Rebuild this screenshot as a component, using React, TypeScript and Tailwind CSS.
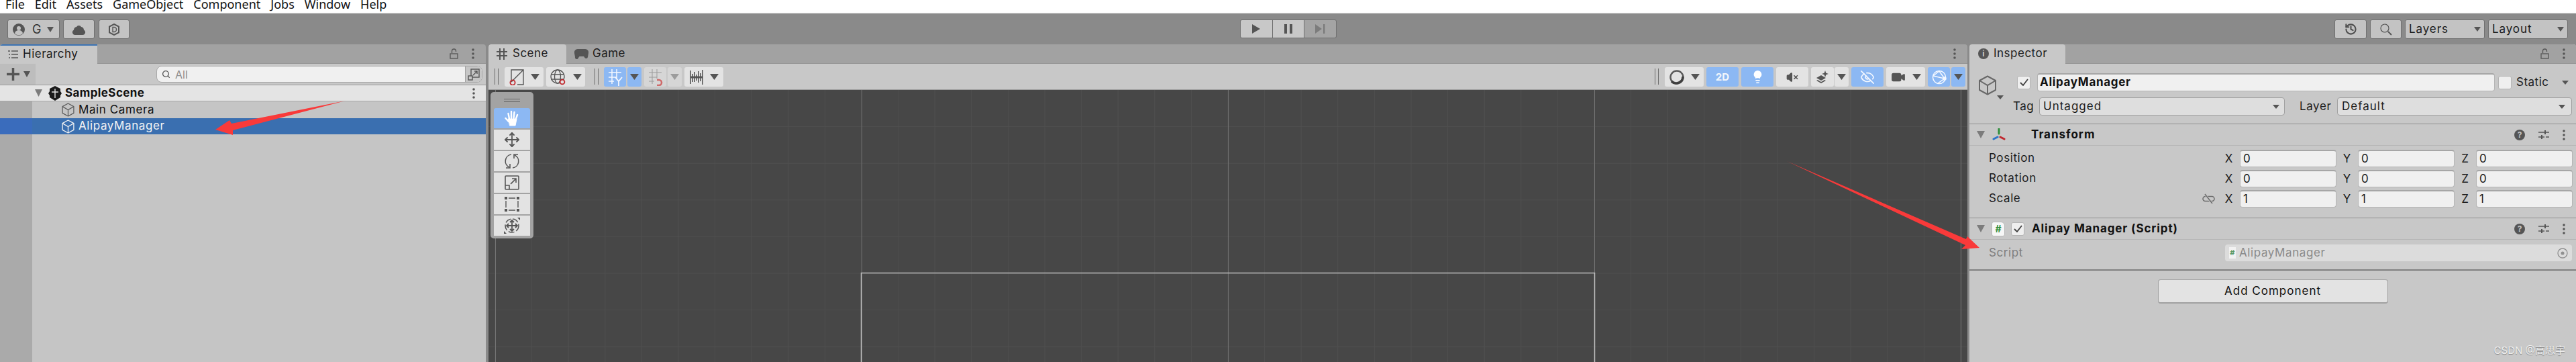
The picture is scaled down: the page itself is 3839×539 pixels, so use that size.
import type { ReactNode } from "react";
import { Lightbulb, Move, Search, VolumeX, EyeOff, Video, History } from "lucide-react";

const DARK = "#555555";

function Tri({ w = 10, h = 7, color = DARK }: { w?: number; h?: number; color?: string }) {
  return (
    <svg width={w} height={h} viewBox="0 0 10 7" className="shrink-0" preserveAspectRatio="none">
      <path d="M0 0h10L5 7z" fill={color} />
    </svg>
  );
}

function Dots() {
  return (
    <svg width="4" height="16" viewBox="0 0 4 16" className="shrink-0">
      <circle cx="2" cy="2" r="1.8" fill={DARK} />
      <circle cx="2" cy="8" r="1.8" fill={DARK} />
      <circle cx="2" cy="14" r="1.8" fill={DARK} />
    </svg>
  );
}

function Lock() {
  return (
    <svg width="13" height="16" viewBox="0 0 13 16" fill="none" stroke={DARK} strokeWidth="1.3" className="shrink-0">
      <path d="M3.5 7V4a3 3 0 0 1 6 0v1" />
      <rect x="1" y="8" width="11" height="7" />
    </svg>
  );
}

function Cube({ size = 22, color = DARK, width = 1.6 }: { size?: number; color?: string; width?: number }) {
  return (
    <svg width={size} height={size} viewBox="0 0 30 30" fill="none" stroke={color} strokeWidth={(width * 30) / size} className="shrink-0">
      <path d="M15 1.5 27 8v14l-12 6.5L3 22V8z" strokeLinejoin="round" />
      <path d="M3 8l12 7 12-7M15 15v13.5" />
    </svg>
  );
}

function Handles() {
  return <div className="w-[6px] h-[24px] mt-[2px] shrink-0 border-x border-[#6a6a6a]" />;
}

function Btn({ w, blue, faded, children }: { w: number; blue?: boolean; faded?: boolean; children: ReactNode }) {
  const tone = blue ? "bg-[#8cb8f3]" : faded ? "bg-[#d6d6d6]" : "bg-[#e3e3e3]";
  return (
    <div style={{ width: w }} className={`h-[29px] shrink-0 rounded-[3px] flex items-center justify-center gap-[10px] ${tone}`}>
      {children}
    </div>
  );
}

function TopBtn({ className, children }: { className: string; children: ReactNode }) {
  return (
    <div className={`h-[29px] shrink-0 rounded-[3px] border border-[#6f6f6f] bg-[#c3c3c3] flex items-center ${className}`}>{children}</div>
  );
}

function Tab({ w, active, children }: { w: number; active?: boolean; children: ReactNode }) {
  return (
    <div style={{ width: w }} className={`h-[29px] shrink-0 flex items-center rounded-t-[4px] ${active ? "bg-[#c8c8c8]" : ""}`}>
      {children}
    </div>
  );
}

function AxisField({ axis, value, gap }: { axis: string; value: string; gap: string }) {
  return (
    <>
      <span className={`w-[17px] text-center text-[17px] leading-none text-[#1c1c1c] ${gap}`}>{axis}</span>
      <div className="w-[144px] h-[26px] ml-[8px] pl-[4px] rounded-[4px] bg-[#f0f0f0] border border-[#b4b4b4] border-t-2 border-t-[#a6a6a6] flex items-center text-[17px] text-[#1c1c1c]">
        {value}
      </div>
    </>
  );
}

function VectorRow({ label, value, link }: { label: string; value: string; link?: boolean }) {
  return (
    <div className="flex items-center h-[26px]">
      <span className="w-[349px] ml-[29px] text-[17px] tracking-[0.6px] text-[#1c1c1c] shrink-0">{label}</span>
      <div className="w-[22px] -ml-[33px] mr-[11px] shrink-0 flex justify-center">
        {link && (
          <svg width="19" height="16" viewBox="0 0 19 16" fill="none" stroke="#6b6b6b" strokeWidth="1.5">
            <rect x="1" y="4.5" width="17" height="7" rx="3.5" />
            <path d="M4 1l11 14" stroke="#c8c8c8" strokeWidth="3" />
            <path d="M4 1l11 14" />
          </svg>
        )}
      </div>
      <AxisField axis="X" value={value} gap="" />
      <AxisField axis="Y" value={value} gap="ml-[7px]" />
      <AxisField axis="Z" value={value} gap="ml-[7px]" />
    </div>
  );
}

function CompTools() {
  return (
    <div className="ml-auto mr-[16px] flex items-center gap-[20px]">
      <div className="w-[16px] h-[16px] rounded-full bg-[#555555] text-[#c8c8c8] text-[12px] font-bold leading-none flex items-center justify-center">?</div>
      <svg width="16" height="15" viewBox="0 0 16 15" fill="none" stroke={DARK} strokeWidth="1.5">
        <path d="M0 4h16M0 11h16" strokeDasharray="9 2 5" />
        <path d="M10 1v6M5 8v6" strokeWidth="2" />
      </svg>
      <Dots />
    </div>
  );
}

function CompHeader({ children }: { children: ReactNode }) {
  return <div className="h-[33px] flex items-center border-t border-[#8f8f8f] border-b border-b-[#b6b6b6] pl-[11px]">{children}</div>;
}

function ToolBtn({ active, children }: { active?: boolean; children: ReactNode }) {
  return <div className={`w-[54px] h-[30px] flex items-center justify-center ${active ? "bg-[#8cb8f3] rounded-t-[3px]" : "bg-[#e3e3e3]"}`}>{children}</div>;
}

function SceneGrid() {
  const vs: number[] = [];
  for (let i = 0; i < 41; i++) vs.push(10 + i * 54.6);
  const hs = [54.6, 109.2, 163.8, 218.4, 273, 327.6, 382.2];
  return (
    <svg width="2204" height="405" className="absolute inset-0">
      {vs.map((x) => (
        <line key={x} x1={x} x2={x} y1="0" y2="405" stroke="#505050" />
      ))}
      {hs.map((y) => (
        <line key={y} x1="0" x2="2204" y1={y} y2={y} stroke="#505050" />
      ))}
      {[10.5, 556.5, 1102.5, 1648.5, 2194.5].map((x) => (
        <line key={x} x1={x} x2={x} y1="0" y2="405" stroke="#747474" />
      ))}
      <path d="M555.5 405V272.5H1648.5V405" fill="none" stroke="#bdbdbd" strokeWidth="1.5" />
    </svg>
  );
}

function SceneToolbar() {
  return (
    <div className="h-[39px] bg-[#c8c8c8] border-b border-[#9a9a9a] pt-[5px] flex items-start pl-[9px]">
      <Handles />
      <div className="ml-[9px]"><Btn w={58}>
        <svg width="22" height="24" viewBox="0 0 22 24" fill="none" stroke={DARK} strokeWidth="1.4">
          <path d="M3 17V1h18v22H12M3 19L20 2" />
          <circle cx="5" cy="20" r="3.6" stroke="#c0272d" strokeWidth="1.8" />
        </svg>
        <Tri w={13} h={9} />
      </Btn></div>
      <div className="ml-[4px]"><Btn w={58}>
        <svg width="24" height="24" viewBox="0 0 24 24" fill="none" stroke={DARK} strokeWidth="1.3">
          <circle cx="11" cy="11" r="10" />
          <ellipse cx="11" cy="11" rx="4.5" ry="10" />
          <path d="M1 8h20M1 15h20" />
          <circle cx="18" cy="19" r="3.4" fill="#e3e3e3" stroke="#c0272d" strokeWidth="1.8" />
        </svg>
        <Tri w={13} h={9} />
      </Btn></div>
      <div className="ml-[14px]"><Handles /></div>
      <div className="ml-[8px]"><Btn w={33} blue>
        <svg width="22" height="26" viewBox="0 0 22 26" fill="none" stroke="#f4f8ff" strokeWidth="1.5">
          <path d="M6 1v22M13 1v14M1 6h19M1 13h12M1 19h8" />
          <path d="M11 13l5 6 5-6M16 19v7" strokeWidth="1.8" />
        </svg>
      </Btn></div>
      <div className="ml-[2px]"><Btn w={21} blue><Tri w={13} h={9} /></Btn></div>
      <div className="ml-[4px]"><Btn w={33} faded>
        <svg width="22" height="26" viewBox="0 0 22 26" fill="none" stroke="#9a9a9a" strokeWidth="1">
          <path d="M6 1v22M13 1v14M1 6h19M1 13h12M1 19h8" />
          <path d="M13 17h3a4 4 0 0 1 0 8h-3" stroke="#cf6a6a" strokeWidth="2.6" />
        </svg>
      </Btn></div>
      <div className="ml-[2px]"><Btn w={21} faded><Tri w={13} h={9} color="#9c9c9c" /></Btn></div>
      <div className="ml-[4px]"><Btn w={58}>
        <svg width="20" height="24" viewBox="0 0 20 24" stroke={DARK} strokeWidth="1.6">
          <path d="M1 2v20M4 7v12M7 4v15M10 8v9M13 3v17M16 6v12M19 1v22" />
          <path d="M1 12h18" strokeWidth="3" />
        </svg>
        <Tri w={13} h={9} />
      </Btn></div>

      <div className="ml-auto flex items-start pr-[3px]">
        <Handles />
        <div className="ml-[9px]"><Btn w={58}>
          <svg width="22" height="22" viewBox="0 0 22 22">
            <circle cx="11" cy="11" r="9.5" fill="none" stroke="#5c5c5c" strokeWidth="2.5" />
            <path d="M3 17a10 10 0 0 0 17-7" fill="none" stroke="#3f3f3f" strokeWidth="3.5" />
          </svg>
          <Tri w={13} h={9} />
        </Btn></div>
        <div className="ml-[4px]"><Btn w={48} blue><span className="text-[15px] font-bold text-[#f2f6fb] leading-none">2D</span></Btn></div>
        <div className="ml-[4px]"><Btn w={48} blue><Lightbulb size={21} fill="#ffffff" stroke="#ffffff" strokeWidth={1.5} /></Btn></div>
        <div className="ml-[4px]"><Btn w={48}><VolumeX size={18} fill={DARK} stroke={DARK} strokeWidth={2.2} /></Btn></div>
        <div className="ml-[4px]"><Btn w={34}>
          <svg width="18" height="19" viewBox="0 0 18 19" fill={DARK}>
            <path d="M0 11l7-4 7 4-7 4zM0 15l2-1 5 3 5-3 2 1-7 4z" />
            <path d="M13 0l1.3 3.7L18 5l-3.7 1.3L13 10l-1.3-3.7L8 5l3.7-1.3z" />
          </svg>
        </Btn></div>
        <div className="ml-[1px]"><Btn w={21}><Tri w={13} h={9} /></Btn></div>
        <div className="ml-[4px]"><Btn w={48} blue><EyeOff size={22} stroke="#f4f8ff" strokeWidth={1.8} /></Btn></div>
        <div className="ml-[4px]"><Btn w={58}><Video size={22} fill={DARK} stroke={DARK} strokeWidth={1.5} /><Tri w={13} h={9} /></Btn></div>
        <div className="ml-[4px]"><Btn w={33} blue>
          <svg width="22" height="22" viewBox="0 0 22 22" fill="none" stroke="#f4f8ff" strokeWidth="1.5">
            <circle cx="11" cy="11" r="9.5" />
            <path d="M2 9l9-7 8 11-10 7M11 2l8 11M2 9l17 4" />
            <circle cx="19" cy="13" r="2" fill="#f4f8ff" />
          </svg>
        </Btn></div>
        <div className="ml-[2px]"><Btn w={21} blue><Tri w={13} h={9} /></Btn></div>
      </div>
    </div>
  );
}

function ToolPalette() {
  return (
    <div className="absolute left-[3px] top-[3px] w-[64px] h-[218px] rounded-[5px] bg-[#a3a3a3] flex flex-col items-center">
      <div className="h-[24px] w-full flex items-center justify-center">
        <div className="w-[24px] h-[5px] border-y border-[#666666]" />
      </div>
      <div className="flex flex-col gap-[2px]">
        <ToolBtn active>
          <svg width="24" height="25" viewBox="0 0 24 25" fill="#ffffff" stroke="#ffffff" strokeWidth="2.4" strokeLinecap="round">
            <path d="M8 13L6.500 5M11 12V2M14.500 12L15.500 3M17.500 14L20 7M7 17L2.500 12" />
            <path d="M6.500 13H19L17 23H9z" strokeWidth="1" strokeLinejoin="round" />
          </svg>
        </ToolBtn>
        <ToolBtn><Move size={24} stroke={DARK} strokeWidth={1.8} /></ToolBtn>
        <ToolBtn>
          <svg width="24" height="24" viewBox="0 0 24 24" fill="none" stroke={DARK} strokeWidth="1.6">
            <path d="M11 2A10 10 0 0 0 8 21" />
            <path d="M9 16v6H3" />
            <path d="M13 22A10 10 0 0 0 16 3" />
            <path d="M15 8V2h6" />
          </svg>
        </ToolBtn>
        <ToolBtn>
          <svg width="22" height="22" viewBox="0 0 22 22" fill="none" stroke={DARK} strokeWidth="1.6">
            <rect x="1" y="1" width="20" height="20" rx="1" />
            <path d="M1 15h6v6M9 13l8-8M11 5h6v6" />
          </svg>
        </ToolBtn>
        <ToolBtn>
          <svg width="22" height="22" viewBox="0 0 22 22" fill={DARK} stroke={DARK}>
            <rect x="0.5" y="0.5" width="3" height="3" />
            <rect x="18.5" y="0.5" width="3" height="3" />
            <rect x="0.5" y="18.5" width="3" height="3" />
            <rect x="18.5" y="18.5" width="3" height="3" />
            <path d="M6 2h10M6 20h10M2 6v10M20 6v10" fill="none" strokeWidth="1.4" />
          </svg>
        </ToolBtn>
        <ToolBtn>
          <svg width="24" height="24" viewBox="0 0 24 24" fill="none" stroke={DARK} strokeWidth="1.5">
            <circle cx="12" cy="12" r="10" strokeDasharray="9 3" />
            <path d="M12 4v16M4 12h16M9 7l3-3 3 3M9 17l3 3 3-3M7 9l-3 3 3 3M17 9l3 3-3 3" strokeWidth="1.8" />
            <path d="M0 24v-4l4 4zM24 0v4l-4-4z" fill={DARK} stroke="none" />
          </svg>
        </ToolBtn>
      </div>
    </div>
  );
}

function Hierarchy() {
  return (
    <section className="w-[724px] shrink-0 flex flex-col rounded-t-[4px] overflow-hidden">
      <div className="h-[29px] bg-[#a2a2a2] flex items-center border-b border-[#949494]">
        <div className="w-[145px] h-[29px] bg-[#c8c8c8] border-t-2 border-[#3c74b4] flex items-center pl-[12px] gap-[7px]">
          <svg width="15" height="14" viewBox="0 0 15 14" stroke={DARK} strokeWidth="1.5">
            <path d="M5 2h10M5 7h10M5 12h10M0 2h3M1 7h2M1 12h2" />
          </svg>
          <span className="text-[17px] tracking-[0.5px] text-[#1c1c1c]">Hierarchy</span>
        </div>
        <div className="ml-auto mr-[17px] flex items-center gap-[20px]">
          <Lock />
          <Dots />
        </div>
      </div>
      <div className="h-[32px] bg-[#c8c8c8] border-b border-[#9a9a9a] flex items-center">
        <div className="w-[53px] h-[31px] bg-[#bdbdbd] flex items-center pl-[10px] gap-[6px]">
          <svg width="19" height="19" viewBox="0 0 19 19" stroke={DARK} strokeWidth="3.5"><path d="M9.5 0v19M0 9.5h19" /></svg>
          <Tri w={10} h={9} />
        </div>
        <div className="ml-[180px] w-[486px] h-[25px] rounded-[8px] bg-[#f0f0f0] border border-[#a8a8a8] flex items-center overflow-hidden">
          <div className="ml-[7px] flex items-center gap-[1px]"><Search size={13} stroke={DARK} strokeWidth={2.4} /></div>
          <span className="ml-[7px] text-[16px] text-[#8e8e8e]">All</span>
          <div className="ml-auto w-[25px] h-full bg-[#c6c6c6] border-l border-[#a0a0a0] flex items-center justify-center">
            <svg width="18" height="18" viewBox="0 0 18 18" fill="none" stroke={DARK} strokeWidth="1.4">
              <rect x="5" y="1" width="12" height="12" />
              <rect x="1" y="11" width="6" height="6" fill="#c6c6c6" />
              <path d="M8 10l6-6M10 4h4v4" />
            </svg>
          </div>
        </div>
      </div>
      <div className="h-[24px] bg-[#e4e4e4] border-b border-[#a8a8a8] flex items-center pl-[52px]">
        <Tri w={11} h={11} color="#7c7c7c" />
        <svg width="20" height="22" viewBox="0 0 20 22" className="ml-[9px]" fill="#1a1a1a">
          <path d="M10 0l8 4v4l2 3-2 3v3l-8 5-8-5v-3L0 11l2-3V4z" />
          <path d="M10 4v14M5 9h10" stroke="#e4e4e4" strokeWidth="1.4" />
        </svg>
        <span className="ml-[5px] text-[17px] font-bold tracking-[0.4px] text-[#111111]">SampleScene</span>
        <div className="ml-auto mr-[16px]"><Dots /></div>
      </div>
      <div className="flex-1 bg-[#c5c5c5] flex flex-col">
        <div className="h-[25px] flex">
          <div className="w-[48px] bg-[#aaaaaa]" />
          <div className="pl-[43px] flex items-center gap-[5px]">
            <Cube size={21} color="#5c5c5c" width={1.3} />
            <span className="text-[17px] tracking-[0.6px] text-[#111111]">Main Camera</span>
          </div>
        </div>
        <div className="h-[24px] flex bg-[#3a6fb0]">
          <div className="w-[48px] bg-[#3a6cbc]" />
          <div className="pl-[43px] flex items-center gap-[5px]">
            <Cube size={21} color="#f4f4f4" width={1.3} />
            <span className="text-[17px] tracking-[0.6px] text-[#f4f4f4]">AlipayManager</span>
          </div>
        </div>
        <div className="flex-1 w-[48px] bg-[#aaaaaa]" />
      </div>
    </section>
  );
}

function SceneView() {
  return (
    <section className="w-[2204px] ml-[4px] shrink-0 flex flex-col rounded-t-[4px] overflow-hidden">
      <div className="h-[29px] bg-[#a2a2a2] flex items-center border-b border-[#949494]">
        <Tab w={116} active>
          <svg width="16" height="17" viewBox="0 0 16 17" stroke={DARK} strokeWidth="2" className="ml-[12px]">
            <path d="M5 0v17M11 0v17M0 5h16M0 11h16" />
          </svg>
          <span className="ml-[8px] text-[17px] tracking-[0.5px] text-[#1c1c1c]">Scene</span>
        </Tab>
        <svg width="21" height="15" viewBox="0 0 21 15" fill={DARK} className="ml-[12px]">
          <path d="M5 0h11a5 5 0 0 1 5 6l-1 6a2.5 2.5 0 0 1-4.500 1l-1.500-2H7.500L6 13a2.500 2.500 0 0 1-5-1L0 6a5 5 0 0 1 5-6z" />
        </svg>
        <span className="ml-[6px] text-[17px] tracking-[0.5px] text-[#1c1c1c]">Game</span>
        <div className="ml-auto mr-[17px]"><Dots /></div>
      </div>
      <SceneToolbar />
      <div className="flex-1 relative bg-[#474747]">
        <SceneGrid />
        <ToolPalette />
      </div>
    </section>
  );
}

function Inspector() {
  return (
    <section className="flex-1 ml-[3px] flex flex-col rounded-t-[4px] overflow-hidden bg-[#c8c8c8]">
      <div className="h-[29px] bg-[#a2a2a2] flex items-center border-b border-[#949494]">
        <div className="w-[143px] h-[29px] rounded-t-[4px] bg-[#c8c8c8] flex items-center pl-[13px] gap-[7px]">
          <div className="w-[16px] h-[16px] rounded-full bg-[#555555] text-[#c8c8c8] text-[12px] font-bold leading-none flex items-center justify-center">i</div>
          <span className="text-[17px] tracking-[0.5px] text-[#1c1c1c]">Inspector</span>
        </div>
        <div className="ml-auto mr-[16px] flex items-center gap-[20px]">
          <Lock />
          <Dots />
        </div>
      </div>

      <div className="h-[89px] flex shrink-0">
        <div className="w-[65px] pl-[12px] pt-[17px] flex flex-col shrink-0">
          <Cube size={30} color="#686868" width={2} />
          <div className="ml-[29px]"><Tri w={10} h={6} /></div>
        </div>
        <div className="flex-1 flex flex-col">
          <div className="h-[27px] mt-[14px] flex items-center">
            <div className="ml-[6px] w-[20px] h-[20px] rounded-[3px] bg-[#efefef] border border-[#b4b4b4] flex items-center justify-center">
              <svg width="13" height="11" viewBox="0 0 13 11" fill="none" stroke="#3f3f3f" strokeWidth="1.8"><path d="M1 6l4 4 7-9" /></svg>
            </div>
            <div className="ml-[10px] w-[682px] h-[27px] rounded-[4px] bg-[#f0f0f0] border border-[#b4b4b4] border-t-2 border-t-[#a6a6a6] pl-[3px] flex items-center text-[17px] font-bold tracking-[0.7px] text-[#111111]">AlipayManager</div>
            <div className="ml-[5px] w-[20px] h-[20px] rounded-[3px] bg-[#efefef] border border-[#b4b4b4]" />
            <span className="ml-[7px] text-[17px] tracking-[0.5px] text-[#1c1c1c]">Static</span>
            <div className="ml-[19px]"><Tri w={10} h={6} /></div>
          </div>
          <div className="h-[27px] mt-[9px] flex items-center">
            <span className="text-[17px] tracking-[0.5px] text-[#1c1c1c] w-[39px]">Tag</span>
            <div className="w-[366px] h-[27px] rounded-[4px] bg-[#dedede] border border-[#a0a0a0] pl-[5px] pr-[7px] flex items-center justify-between text-[17px] tracking-[1px] text-[#1c1c1c]">
              Untagged <Tri w={10} h={6} />
            </div>
            <span className="ml-[22px] w-[56px] text-[17px] tracking-[0.6px] text-[#1c1c1c]">Layer</span>
            <div className="w-[350px] h-[27px] rounded-[4px] bg-[#dedede] border border-[#a0a0a0] pl-[6px] pr-[9px] flex items-center justify-between text-[17px] tracking-[1px] text-[#1c1c1c]">
              Default <Tri w={10} h={6} />
            </div>
          </div>
        </div>
      </div>

      <CompHeader>
        <Tri w={12} h={11} color="#7c7c7c" />
        <svg width="20" height="20" viewBox="0 0 20 20" className="ml-[11px]" strokeWidth="3" strokeLinecap="round">
          <path d="M10 1v7" stroke="#2f8f3c" />
          <path d="M2 16l6-3" stroke="#2c74c9" />
          <path d="M18 16l-6-3" stroke="#c0272d" />
        </svg>
        <span className="ml-[38px] text-[17px] font-bold tracking-[1px] text-[#111111]">Transform</span>
        <CompTools />
      </CompHeader>
      <div className="pt-[6px] h-[107px] flex flex-col gap-[4px] shrink-0">
        <VectorRow label="Position" value="0" />
        <VectorRow label="Rotation" value="0" />
        <VectorRow label="Scale" value="1" link />
      </div>

      <CompHeader>
        <Tri w={12} h={11} color="#7c7c7c" />
        <div className="ml-[10px] w-[20px] h-[22px] rounded-[3px] rounded-tr-[6px] bg-[#f7f7f7] border border-[#b8b8b8] text-[#2f8f3c] text-[14px] font-bold leading-none flex items-center justify-center">#</div>
        <div className="ml-[9px] w-[20px] h-[20px] rounded-[3px] bg-[#efefef] border border-[#b4b4b4] flex items-center justify-center">
          <svg width="13" height="11" viewBox="0 0 13 11" fill="none" stroke="#3f3f3f" strokeWidth="1.8"><path d="M1 6l4 4 7-9" /></svg>
        </div>
        <span className="ml-[11px] text-[17px] font-bold tracking-[0.9px] text-[#111111]">Alipay Manager (Script)</span>
        <CompTools />
      </CompHeader>
      <div className="h-[46px] shrink-0 flex items-start pt-[7px] border-b-2 border-[#808080]">
        <span className="ml-[29px] w-[352px] text-[17px] tracking-[0.6px] text-[#7e7e7e]">Script</span>
        <div className="w-[517px] h-[25px] rounded-[4px] bg-[#dcdcdc] flex items-center pl-[6px] pr-[6px] text-[17px] tracking-[0.6px] text-[#8a8a8a]">
          <div className="w-[10px] h-[17px] bg-[#f2f2f2] text-[#5c9a66] text-[11px] font-bold leading-none flex items-center justify-center">#</div>
          <span className="ml-[5px]">AlipayManager</span>
          <svg width="16" height="16" viewBox="0 0 16 16" fill="none" stroke="#8f8f8f" strokeWidth="1.3" className="ml-auto">
            <circle cx="8" cy="8" r="7" />
            <circle cx="8" cy="8" r="2.5" fill="#8f8f8f" stroke="none" />
          </svg>
        </div>
      </div>
      <div className="flex justify-center pt-[13px] flex-1">
        <div className="w-[343px] h-[36px] rounded-[4px] bg-[#e3e3e3] border border-[#a0a0a0] border-b-2 flex items-center justify-center text-[17px] tracking-[1px] text-[#111111]">Add Component</div>
      </div>
    </section>
  );
}

export default function App() {
  return (
    <div className="relative w-[3839px] h-[539px] overflow-hidden flex flex-col bg-[#8a8a8a] [font-family:Inter,'Noto_Sans_CJK_SC',sans-serif]">
      <div className="h-[19px] bg-white shrink-0 overflow-hidden pl-[8px] flex text-[18px] leading-[22px] text-[#111111] gap-[15px] [font-family:'Noto_Sans',sans-serif]">
        <span className="-mt-[5px]">File</span>
        <span className="-mt-[5px]">Edit</span>
        <span className="-mt-[5px]">Assets</span>
        <span className="-mt-[5px]">GameObject</span>
        <span className="-mt-[5px]">Component</span>
        <span className="-mt-[5px]">Jobs</span>
        <span className="-mt-[5px]">Window</span>
        <span className="-mt-[5px]">Help</span>
      </div>
      <div className="h-[1px] bg-[#e8e8e8] shrink-0" />

      <div className="h-[46px] shrink-0 pt-[9px] flex items-start pl-[11px] pr-[12px]">
        <TopBtn className="w-[78px] pl-[6px]">
          <svg width="20" height="18" viewBox="0 0 20 18" fill={DARK}>
            <ellipse cx="10" cy="9" rx="9" ry="9" />
            <circle cx="10" cy="7" r="3" fill="#c3c3c3" />
            <path d="M4 15a6 5 0 0 1 12 0 9 9 0 0 1-12 0z" fill="#c3c3c3" />
          </svg>
          <span className="ml-[10px] text-[18px] leading-none text-[#333333]">G</span>
          <div className="ml-[9px]"><Tri w={10} h={8} /></div>
        </TopBtn>
        <TopBtn className="w-[47px] ml-[5px] justify-center">
          <svg width="21" height="16" viewBox="0 0 21 16" fill={DARK}>
            <path d="M5 16a4 4 0 0 1-2-7.500A5 5 0 0 1 7 4a4 4 0 0 1 7 0 5 5 0 0 1 4 4.500A4 4 0 0 1 16 16z" />
          </svg>
        </TopBtn>
        <TopBtn className="w-[46px] ml-[6px] justify-center">
          <svg width="16" height="18" viewBox="0 0 16 18" fill="none" stroke={DARK} strokeWidth="2">
            <path d="M8 1l7 3.500v9L8 17l-7-3.500v-9z" />
            <path d="M6 5.500h2a3 3 0 0 1 0 7H6z" strokeWidth="1.4" />
          </svg>
        </TopBtn>

        <div className="ml-[1655px] h-[28px] w-[144px] rounded-[3px] border border-[#6f6f6f] bg-[#6f6f6f] flex gap-[1px] overflow-hidden">
          <div className="flex-1 bg-[#c8c8c8] flex items-center justify-center">
            <svg width="12" height="14" viewBox="0 0 12 14" fill={DARK}><path d="M0 0l12 7-12 7z" /></svg>
          </div>
          <div className="flex-1 bg-[#c8c8c8] flex items-center justify-center">
            <svg width="12" height="14" viewBox="0 0 12 14" fill={DARK}><path d="M0 0h4v14H0zM8 0h4v14H8z" /></svg>
          </div>
          <div className="flex-1 bg-[#a4a4a4] flex items-center justify-center">
            <svg width="15" height="14" viewBox="0 0 15 14" fill="#7c7c7c"><path d="M0 0l10 7-10 7zM12 0h2.500v14H12z" /></svg>
          </div>
        </div>

        <TopBtn className="w-[48px] ml-auto justify-center"><History size={19} stroke="#4f4f4f" strokeWidth={2.6} /></TopBtn>
        <TopBtn className="w-[47px] ml-[5px] justify-center">
          <svg width="18" height="18" viewBox="0 0 18 18" fill="none" stroke={DARK}>
            <circle cx="7" cy="7" r="6" strokeWidth="1.2" />
            <path d="M12 12l5 5" strokeWidth="2" />
          </svg>
        </TopBtn>
        <TopBtn className="w-[119px] ml-[5px] px-[5px] justify-between text-[17px] tracking-[0.9px] text-[#1c1c1c]">Layers <Tri w={10} h={7} /></TopBtn>
        <TopBtn className="w-[119px] ml-[5px] px-[5px] justify-between text-[17px] tracking-[0.9px] text-[#1c1c1c]">Layout <Tri w={10} h={7} /></TopBtn>
      </div>

      <div className="flex-1 flex min-h-0">
        <Hierarchy />
        <SceneView />
        <Inspector />
      </div>

      <svg width="3839" height="539" className="absolute inset-0 pointer-events-none">
        <polygon points="515,150 345,184 342,179 321,193 347,201 347,194" fill="#f93a3a" />
        <polygon points="2663,240 2930,356 2932,352 2950,369 2923,371 2929,365" fill="#f93a3a" />
      </svg>
      <div className="absolute right-[16px] top-[511px] text-[15px] text-[#efefef] [text-shadow:0_1px_1px_#808080]">CSDN @高思宇</div>
    </div>
  );
}
